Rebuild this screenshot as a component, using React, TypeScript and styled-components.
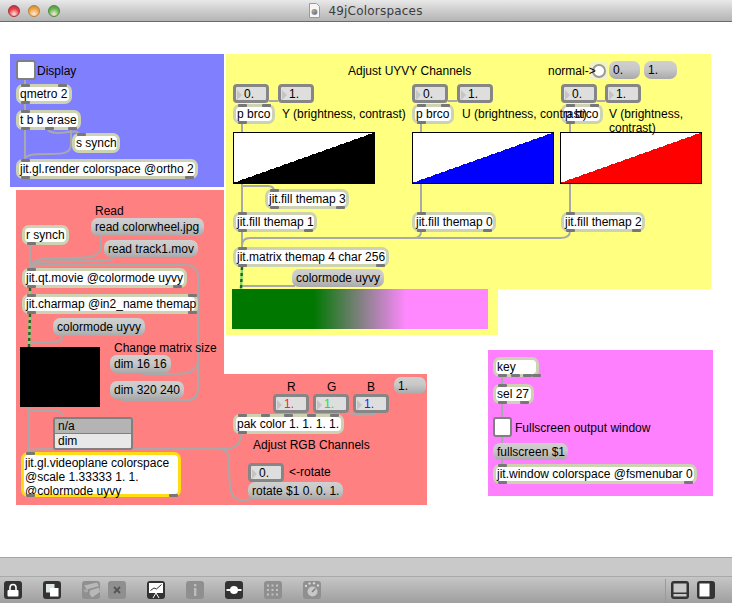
import { FC, ReactNode } from 'react';
import styled, { createGlobalStyle, css } from 'styled-components';

const CANVAS_TOP = 22;

const GlobalStyle = createGlobalStyle`
    html, body {
        margin: 0;
        padding: 0;
        overflow: hidden;
        background: #fff;
    }
`;

interface IPlace {
    $x: number;
    $y: number;
    $w: number;
    $h: number;
}

// the patcher is a free canvas, everything on it sits at its patch coordinates
const place = css<IPlace>`
    position: absolute;
    left: ${p => p.$x}px;
    top: ${p => p.$y - CANVAS_TOP}px;
    width: ${p => p.$w}px;
    height: ${p => p.$h}px;
    box-sizing: border-box;
`;

const Window = styled.div`
    display: flex;
    flex-direction: column;
    width: 732px;
    height: 603px;
    font-family: "Liberation Sans", Arial, sans-serif;
    font-size: 12px;
    color: #000;
`;

const TitleBar = styled.div`
    position: relative;
    display: flex;
    flex: 0 0 22px;
    box-sizing: border-box;
    align-items: center;
    justify-content: center;
    gap: 8px;
    background: linear-gradient(#e9e9e9, #d2d2d2 40%, #b4b4b4);
    border-bottom: 1px solid #6b6b6b;
    font-family: "DejaVu Sans", sans-serif;
    font-size: 12px;
    letter-spacing: 0.2px;
    color: #3c3c3c;
`;

const Lights = styled.div`
    position: absolute;
    left: 8px;
    top: 5px;
    display: flex;
    gap: 8px;
`;

const Light = styled.span<{ $color: string; $edge: string }>`
    width: 12px;
    height: 12px;
    border-radius: 50%;
    box-sizing: border-box;
    border: 1px solid ${p => p.$edge};
    background: radial-gradient(circle at 50% 80%, #ffe8e0 0, ${p => p.$color} 55%, ${p => p.$edge} 100%);
`;

const Canvas = styled.div`
    position: relative;
    flex: 1;
    background: #fff;
    overflow: hidden;
`;

const StatusStrip = styled.div`
    flex: 0 0 20px;
    box-sizing: border-box;
    background: #c9c9c9;
    border-top: 1px solid #a6a6a6;
    border-bottom: 1px solid #a9a9a9;
`;

const ToolBar = styled.div`
    display: flex;
    flex: 0 0 26px;
    box-sizing: border-box;
    align-items: flex-start;
    gap: 21px;
    padding: 4px 17px 0 4px;
    background: linear-gradient(#c6c6c6, #9f9f9f);
`;

const ToolGap = styled.div`
    display: flex;
    gap: 8px;
`;

const ToolRight = styled.div`
    display: flex;
    gap: 8px;
    margin-left: auto;
    padding-left: 5px;
    height: 22px;
    margin-top: -2px;
    padding-top: 2px;
    border-left: 1px solid #9a9a9a;
`;

const ToolIcon = styled.div<{ $dim?: boolean }>`
    width: 18px;
    height: 18px;
    border-radius: 3px;
    background: ${p => (p.$dim ? '#8f8f8f' : '#333')};
    svg {
        display: block;
    }
`;

const Panel = styled.div<IPlace & { $color: string }>`
    ${place};
    background: ${p => p.$color};
`;

const Wires = styled.svg`
    position: absolute;
    left: 0;
    top: 0;
    width: 732px;
    height: 536px;
    fill: none;
`;

const TextBox = styled.div`
    display: flex;
    align-items: center;
    padding-left: 4px;
    white-space: nowrap;
`;

const ObjectBox = styled(TextBox)<IPlace>`
    ${place};
    background: #fff;
    border: 3px solid #cdd2b3;
    border-radius: 7px;
    padding-left: 1px;
`;

const HotBox = styled.div<IPlace>`
    ${place};
    background: #fff;
    border: 3px solid #ffdc14;
    border-radius: 7px;
    padding: 1px 0 0 1px;
    line-height: 14px;
    font-size: 12px;
    white-space: pre;
`;

const MessageBox = styled(TextBox)<IPlace>`
    ${place};
    background: linear-gradient(#d0d0d0, #c8c8c8 45%, #a9a9a9);
    border-radius: 7px;
`;

const Port = styled.span<{ $left: number; $bottom?: boolean }>`
    position: absolute;
    left: ${p => p.$left}px;
    ${p => (p.$bottom ? 'bottom: -3px;' : 'top: -3px;')}
    width: 9px;
    height: 3px;
    border-radius: 1px;
    background: #777;
`;

const NumberFrame = styled(TextBox)<IPlace & { $color: string }>`
    ${place};
    padding-left: 8px;
    background: #dedede;
    border: 3px solid #868686;
    border-radius: 4px;
    color: ${p => p.$color};
    &::before {
        content: '';
        position: absolute;
        left: 1px;
        top: 3px;
        border-left: 5px solid #c4c4c4;
        border-top: 5px solid transparent;
        border-bottom: 5px solid transparent;
    }
`;

const Toggle = styled.div<IPlace>`
    ${place};
    background: #fff;
    border: 2px solid #808080;
    border-radius: 3px;
`;

const BangFrame = styled.div<IPlace>`
    ${place};
    display: flex;
    align-items: center;
    justify-content: center;
    background: #f2f2c4;
    border-radius: 4px;
    &::after {
        content: '';
        width: 14px;
        height: 14px;
        box-sizing: border-box;
        background: #fff;
        border: 2px solid #9a9a9a;
        border-radius: 50%;
    }
`;

const Comment = styled.div<{ $x: number; $y: number; $w?: number }>`
    position: absolute;
    left: ${p => p.$x}px;
    top: ${p => p.$y - CANVAS_TOP - 7}px;
    line-height: 14px;
    ${p => (p.$w ? `width: ${p.$w}px;` : 'white-space: nowrap;')}
`;

const Pwindow = styled.div<IPlace>`
    ${place};
    background: #000;
`;

const GradientScope = styled.div<IPlace>`
    ${place};
    background: linear-gradient(90deg, #007800 32%, #ff88ff 68%);
`;

const UmenuFrame = styled.div<IPlace>`
    ${place};
    display: flex;
    flex-direction: column;
    border: 2px solid #808080;
    border-radius: 3px;
    overflow: hidden;
`;

const UmenuRow = styled.div<{ $head?: boolean }>`
    flex: 1;
    display: flex;
    align-items: center;
    padding-left: 3px;
    background: ${p => (p.$head ? '#b4b4b4' : '#e8e8e8')};
    ${p => (p.$head ? 'border-bottom: 1px solid #808080;' : '')}
`;

const GraphFrame = styled.svg<IPlace>`
    ${place};
    display: block;
    background: #fff;
    border: 1px solid #000;
`;

interface INode {
    x: number;
    y: number;
    w: number;
    text: string;
    h?: number;
    top?: number[];
    bottom?: number[];
}

const objects: INode[] = [
    { x: 16, y: 84, w: 56, text: 'qmetro 2', top: [2, 39], bottom: [2] },
    { x: 16, y: 110, w: 65, text: 't b b erase', top: [2], bottom: [2, 26, 49] },
    { x: 72, y: 133, w: 48, text: 's synch', top: [2] },
    { x: 16, y: 159, w: 182, text: 'jit.gl.render colorspace @ortho 2', top: [2], bottom: [2, 166] },
    { x: 22, y: 225, w: 47, text: 'r synch', bottom: [2] },
    { x: 22, y: 268, w: 165, text: 'jit.qt.movie @colormode uyvy', top: [2], bottom: [2, 148] },
    { x: 22, y: 294, w: 176, text: 'jit.charmap @in2_name themap', top: [2, 163], bottom: [2, 163] },
    { x: 233, y: 104, w: 42, text: 'p brco', top: [2, 26], bottom: [2] },
    { x: 412, y: 104, w: 42, text: 'p brco', top: [2, 26], bottom: [2] },
    { x: 561, y: 104, w: 42, text: 'p brco', top: [2, 26], bottom: [2] },
    { x: 265, y: 189, w: 84, text: 'jit.fill themap 3', top: [2], bottom: [2, 68] },
    { x: 233, y: 212, w: 84, text: 'jit.fill themap 1', top: [2], bottom: [2, 68] },
    { x: 412, y: 212, w: 84, text: 'jit.fill themap 0', top: [2], bottom: [2, 68] },
    { x: 561, y: 212, w: 84, text: 'jit.fill themap 2', top: [2], bottom: [2, 68] },
    { x: 233, y: 247, w: 156, text: 'jit.matrix themap 4 char 256', top: [2], bottom: [2, 140] },
    { x: 233, y: 414, w: 111, text: 'pak color 1. 1. 1. 1.', top: [2, 25, 48, 71, 94], bottom: [2] },
    { x: 493, y: 357, w: 46, text: 'key', bottom: [2, 15, 27, 36] },
    { x: 493, y: 384, w: 41, text: 'sel 27', top: [2], bottom: [2, 24] },
    { x: 493, y: 464, w: 204, text: 'jit.window colorspace @fsmenubar 0', top: [2], bottom: [2, 188] },
];

const messages: INode[] = [
    { x: 91, y: 218, w: 113, h: 18, text: 'read colorwheel.jpg' },
    { x: 104, y: 240, w: 94, h: 17, text: 'read track1.mov' },
    { x: 53, y: 318, w: 92, h: 18, text: 'colormode uyvy' },
    { x: 110, y: 355, w: 61, h: 18, text: 'dim 16 16' },
    { x: 110, y: 381, w: 74, h: 18, text: 'dim 320 240' },
    { x: 292, y: 269, w: 92, h: 18, text: 'colormode uyvy' },
    { x: 609, y: 61, w: 31, h: 18, text: '0.' },
    { x: 644, y: 61, w: 33, h: 18, text: '1.' },
    { x: 394, y: 377, w: 32, h: 17, text: '1.' },
    { x: 248, y: 482, w: 95, h: 17, text: 'rotate $1 0. 0. 1.' },
    { x: 493, y: 443, w: 75, h: 17, text: 'fullscreen $1' },
];

const numbers: { x: number; y: number; text: string; color?: string }[] = [
    { x: 233, y: 84, text: '0.' },
    { x: 278, y: 84, text: '1.' },
    { x: 412, y: 84, text: '0.' },
    { x: 457, y: 84, text: '1.' },
    { x: 561, y: 84, text: '0.' },
    { x: 605, y: 84, text: '1.' },
    { x: 273, y: 394, text: '1.', color: '#ff2020' },
    { x: 313, y: 394, text: '1.', color: '#20e020' },
    { x: 353, y: 394, text: '1.', color: '#2020ff' },
    { x: 248, y: 463, text: '0.' },
];

const comments: { x: number; y: number; text: string; w?: number }[] = [
    { x: 37, y: 71, text: 'Display' },
    { x: 95, y: 211, text: 'Read' },
    { x: 114, y: 348, text: 'Change matrix size' },
    { x: 348, y: 71, text: 'Adjust UYVY Channels' },
    { x: 548, y: 71, text: 'normal->' },
    { x: 282, y: 114, text: 'Y (brightness, contrast)' },
    { x: 462, y: 114, text: 'U (brightness, contrast)' },
    { x: 609, y: 114, text: 'V (brightness, contrast)', w: 90 },
    { x: 287, y: 387, text: 'R' },
    { x: 327, y: 387, text: 'G' },
    { x: 367, y: 387, text: 'B' },
    { x: 253, y: 445, text: 'Adjust RGB Channels' },
    { x: 289, y: 472, text: '<-rotate' },
    { x: 515, y: 428, text: 'Fullscreen output window' },
];

const graphs: { x: number; color: string }[] = [
    { x: 233, color: '#000' },
    { x: 412, color: '#0000ff' },
    { x: 560, color: '#ff0000' },
];

const wires = [
    'M25 80V110', 'M25 130V159',
    'M48 130C52 134 60 133 68 132S78 131 80 135',
    'M71 130V144C71 153 64 154 50 154C36 154 28 154 25 158',
    'M30 244V268',
    'M101 236V246C101 256 92 258 70 258C45 258 32 258 30 268',
    'M113 257C113 261 106 261 80 261C45 261 32 261 30 268',
    'M30 268C32 265 36 265 50 265H186C194 265 198 270 198 278V388C198 396 194 400 188 400H122',
    'M140 373C142 374 186 375 190 372C196 369 198 366 198 360',
    'M62 336V338C62 342 58 342 50 342C38 342 30 342 29 346',
    'M29 407V452',
    'M29 411H56C60 411 62 412 63 416',
    'M30 450C32 449 36 449 50 449H224C230 449 238 447 240 440L242 433',
    'M253 498C244 502 236 501 232 494C229 488 229 470 229 462C229 452 226 449 218 449',
    'M314 413C312 415 306 416 302 416', 'M350 413C358 416 372 416 376 413',
    'M269 101H278', 'M448 101H457', 'M597 101H605',
    'M242 123V132', 'M242 184V212', 'M242 231V247',
    'M242 186C248 186 262 186 268 186C272 186 274 188 274 191',
    'M421 123V132', 'M421 184V212',
    'M570 123V132', 'M570 184V212',
    'M570 231C570 236 566 238 560 238H250C244 238 242 241 242 246',
    'M421 231C421 236 419 238 414 238',
    'M241 286H295',
    'M502 377V384', 'M502 404V417', 'M502 437V443', 'M502 460V464',
];

const matrixWires = ['M30 288V294', 'M30 314L29 347', 'M242 267L241 289'];

const GraphScope: FC<{ x: number; color: string }> = ({ x, color }) => {
    // the ramp is a finely stepped line in the picture
    const steps: string[] = ['0,50'];
    for (let i = 0; i < 70; i++) {
        const y = 50 - Math.round(((i + 1) * 50) / 70);
        steps.push(`${i * 2},${y}`);
        steps.push(`${(i + 1) * 2},${y}`);
    }
    steps.push('140,50');
    return (
        <GraphFrame $x={x} $y={132} $w={142} $h={52} viewBox="0 0 140 50">
            <polygon points={steps.join(' ')} fill={color} shapeRendering="crispEdges" />
        </GraphFrame>
    );
};

const ports = (node: INode): ReactNode => (
    <>
        {node.top?.map(left => <Port key={`t${left}`} $left={left} />)}
        {node.bottom?.map(left => <Port key={`b${left}`} $left={left} $bottom />)}
    </>
);

const DocIcon: FC = () => (
    <svg width="11" height="15" viewBox="0 0 11 15">
        <path d="M.5.5H7.5L10.5 3.5V14.5H.5Z" fill="#f6f6f6" stroke="#9a9a9a" />
        <circle cx="5.5" cy="9" r="3" fill="#8a8f98" />
        <circle cx="4.5" cy="8" r="1.2" fill="#e39a4a" />
        <circle cx="6.5" cy="10" r="1" fill="#4a7fc0" />
    </svg>
);

const tools: { dim?: boolean; art: ReactNode }[] = [
    {
        art: (
            <>
                <path d="M6 9V6.5a3 3 0 0 1 6 0V9" fill="none" stroke="#fff" strokeWidth="1.6" />
                <rect x="3.5" y="9" width="11" height="6.5" rx="1" fill="#fff" />
            </>
        ),
    },
    {
        art: (
            <>
                <rect x="3" y="3" width="8.5" height="8.5" fill="#dfe9e6" />
                <rect x="7" y="7" width="8.5" height="8.5" fill="#fff" />
            </>
        ),
    },
    {
        dim: true,
        art: (
            <>
                <path d="M2 4.5L15 1.5L17 5L5 8.5Z" fill="#b8b8b8" />
                <path d="M1.5 8.5L6 8V11L2.5 11.5Z" fill="#a8a8a8" />
                <path d="M8 9.5L17 6.5L18 11L10 16.5L7.5 13Z" fill="#b8b8b8" />
            </>
        ),
    },
    {
        dim: true,
        art: <path d="M6 6L12 12M12 6L6 12" stroke="#555" strokeWidth="1.8" />,
    },
    {
        art: (
            <>
                <rect x="2" y="2" width="14" height="10" fill="#fff" />
                <path d="M3.5 9.5L7 7L9.5 8L14.5 3.5" fill="none" stroke="#333" />
                <path d="M9 12L6 17M9 12L12 17" stroke="#fff" />
            </>
        ),
    },
    {
        dim: true,
        art: (
            <>
                <rect x="8" y="3" width="2.4" height="2.4" fill="#bdbdbd" />
                <rect x="8" y="7" width="2.4" height="8" fill="#bdbdbd" />
            </>
        ),
    },
    {
        art: (
            <>
                <rect x="1.5" y="8" width="15" height="2" fill="#fff" />
                <circle cx="9" cy="9" r="4" fill="#fff" />
            </>
        ),
    },
    {
        dim: true,
        art: (
            <g fill="#c4c4c4">
                {[3, 7.5, 12].map(cx =>
                    [3.5, 8, 12.5].map(cy => <rect key={`${cx}${cy}`} x={cx} y={cy} width="2" height="2" />),
                )}
            </g>
        ),
    },
    {
        dim: true,
        art: (
            <>
                <circle cx="9.5" cy="10.5" r="5" fill="#c8c8c8" />
                <path d="M9 11L12.5 7.5" stroke="#777" strokeWidth="1.2" />
                <g fill="#d4d4d4">
                    <circle cx="3" cy="5" r="1.2" />
                    <circle cx="6.5" cy="2.5" r="1.2" />
                    <circle cx="11" cy="2.2" r="1.2" />
                    <circle cx="15" cy="4.5" r="1.2" />
                </g>
            </>
        ),
    },
];

const App: FC = () => (
    <Window>
        <GlobalStyle />
        <TitleBar>
            <Lights>
                <Light $color="#e8424a" $edge="#a8313a" />
                <Light $color="#f0a840" $edge="#b8803a" />
                <Light $color="#68b850" $edge="#4f8a40" />
            </Lights>
            <DocIcon />
            49jColorspaces
        </TitleBar>
        <Canvas>
            <Panel $x={10} $y={54} $w={214} $h={133} $color="#8080ff" />
            <Panel $x={16} $y={190} $w={208} $h={315} $color="#ff8080" />
            <Panel $x={224} $y={374} $w={203} $h={131} $color="#ff8080" />
            <Panel $x={226} $y={54} $w={485} $h={235} $color="#ffff80" />
            <Panel $x={226} $y={289} $w={272} $h={46} $color="#ffff80" />
            <Panel $x={488} $y={350} $w={225} $h={146} $color="#ff80ff" />

            <Wires viewBox="0 22 732 536">
                {wires.map(d => <path key={d} d={d} stroke="#a9a9a9" strokeWidth="2" />)}
                {matrixWires.map(d => (
                    <g key={d}>
                        <path d={d} stroke="#7bdc6e" strokeWidth="2.4" />
                        <path d={d} stroke="#2c5c2c" strokeWidth="2.4" strokeDasharray="3 3" />
                    </g>
                ))}
            </Wires>

            <Pwindow $x={20} $y={347} $w={80} $h={60} />
            <GradientScope $x={232} $y={289} $w={256} $h={40} />
            {graphs.map(g => <GraphScope key={g.x} x={g.x} color={g.color} />)}

            <Toggle $x={16} $y={60} $w={20} $h={20} />
            <Toggle $x={493} $y={417} $w={19} $h={20} />
            <BangFrame $x={589} $y={62} $w={19} $h={18} />

            {messages.map(m => (
                <MessageBox key={`${m.x}-${m.y}`} $x={m.x} $y={m.y} $w={m.w} $h={m.h ?? 18}>
                    {m.text}
                </MessageBox>
            ))}
            {objects.map(o => (
                <ObjectBox key={`${o.x}-${o.y}`} $x={o.x} $y={o.y} $w={o.w} $h={20}>
                    {o.text}
                    {ports(o)}
                </ObjectBox>
            ))}
            {numbers.map(n => (
                <NumberFrame key={`${n.x}-${n.y}`} $x={n.x} $y={n.y} $w={36} $h={19} $color={n.color ?? '#000'}>
                    {n.text}
                </NumberFrame>
            ))}

            <UmenuFrame $x={53} $y={417} $w={80} $h={33}>
                <UmenuRow $head>n/a</UmenuRow>
                <UmenuRow>dim</UmenuRow>
            </UmenuFrame>
            <HotBox $x={21} $y={452} $w={160} $h={45}>
                {'jit.gl.videoplane colorspace\n@scale 1.33333 1. 1.\n@colormode uyvy'}
                <Port $left={2} />
                <Port $left={2} $bottom />
                <Port $left={145} $bottom />
            </HotBox>

            {comments.map(c => (
                <Comment key={c.text} $x={c.x} $y={c.y} $w={c.w}>
                    {c.text}
                </Comment>
            ))}
        </Canvas>
        <StatusStrip />
        <ToolBar>
            <ToolIcon><svg width="18" height="18">{tools[0].art}</svg></ToolIcon>
            <ToolIcon><svg width="18" height="18">{tools[1].art}</svg></ToolIcon>
            <ToolGap>
                <ToolIcon $dim><svg width="18" height="18">{tools[2].art}</svg></ToolIcon>
                <ToolIcon $dim><svg width="18" height="18">{tools[3].art}</svg></ToolIcon>
            </ToolGap>
            {tools.slice(4).map((tool, i) => (
                <ToolIcon key={i} $dim={tool.dim}>
                    <svg width="18" height="18">{tool.art}</svg>
                </ToolIcon>
            ))}
            <ToolRight>
                <ToolIcon>
                    <svg width="18" height="18">
                        <rect x="2.5" y="2.5" width="13" height="9" fill="#c9c9c9" />
                        <rect x="2.5" y="13" width="13" height="2.5" fill="#c9c9c9" />
                    </svg>
                </ToolIcon>
                <ToolIcon>
                    <svg width="18" height="18">
                        <rect x="2.5" y="2.5" width="10" height="13" fill="#fff" />
                    </svg>
                </ToolIcon>
            </ToolRight>
        </ToolBar>
    </Window>
);

export default App;
